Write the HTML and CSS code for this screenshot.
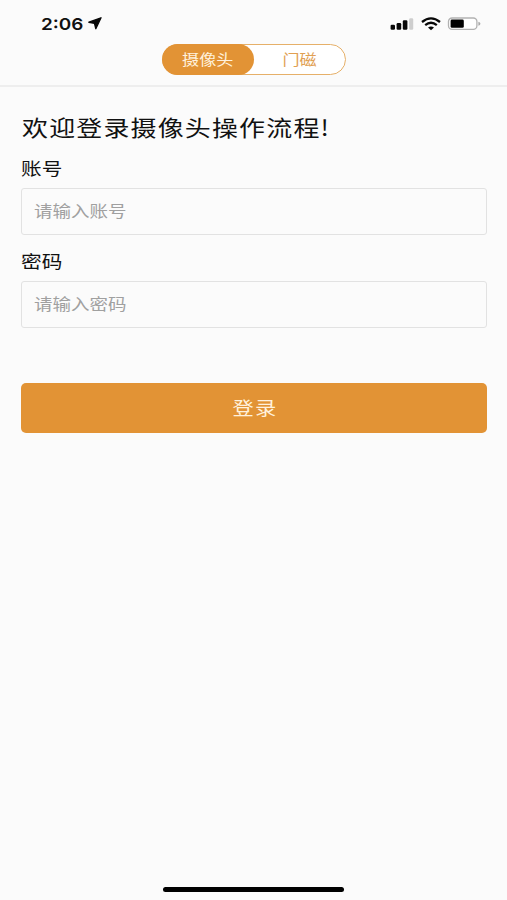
FILE: index.html
```html
<!DOCTYPE html>
<html lang="zh-CN">
<head>
<meta charset="utf-8">
<meta name="viewport" content="width=device-width, initial-scale=1">
<title>登录</title>
<link rel="stylesheet" href="styles.css">
</head>
<body>
<header class="header">
  <div class="status">
    <div class="clock">
      <span class="time">2:06</span>
      <svg class="location" width="14" height="13" viewBox="0 0 14 13"><path d="M13 .8 7.8 11.7 6.5 6.4.9 5.2z" fill="#080808" stroke="#080808" stroke-width="1.4" stroke-linejoin="round"/></svg>
    </div>
    <div class="indicators">
      <svg width="24" height="14" viewBox="0 0 24 14"><g fill="#080808"><rect x=".6" y="7.8" width="4.4" height="4.9" rx="1.2"/><rect x="6.6" y="6" width="4.6" height="6.7" rx="1.2"/><rect x="12.8" y="3.3" width="4.6" height="9.4" rx="1.2"/></g><rect x="19.2" y="1.2" width="4" height="11.5" rx="1.2" fill="#cecece"/></svg>
      <svg class="wifi" width="20" height="14" viewBox="0 0 20 14"><g fill="none" stroke="#080808" stroke-width="2.3"><path d="M1 5Q10-2.3 19 5"/><path d="M4.2 8.2Q10 3.4 15.8 8.2"/></g><path d="M7 10.6Q10 8.3 13 10.6L10 13.2z" fill="#080808"/></svg>
      <svg class="battery" width="34" height="14" viewBox="0 0 34 14"><rect x="1.5" y="1" width="28.4" height="11.4" rx="3.6" fill="#fff" stroke="#b2b2b2" stroke-width="1.3"/><rect x="3.6" y="2.6" width="13.2" height="8.2" rx="1.4" fill="#000"/><path d="M31.4 4.7v4q2-.7 2-2t-2-2z" fill="#aaa"/></svg>
    </div>
  </div>
  <nav class="tabs">
    <button class="tab tab-active"><span class="wide">摄像头</span></button>
    <button class="tab"><span class="wide">门磁</span></button>
  </nav>
</header>
<main class="content">
  <h1 class="title"><span class="wide">欢迎登录摄像头操作流程!</span></h1>
  <form class="form">
    <label class="label" for="account"><span class="wide">账号</span></label>
    <div class="field"><input class="input" id="account" type="text" placeholder="请输入账号"></div>
    <label class="label" for="password"><span class="wide">密码</span></label>
    <div class="field"><input class="input" id="password" type="password" placeholder="请输入密码"></div>
    <button class="submit" type="button"><span class="wide">登录</span></button>
  </form>
</main>
<footer class="home"><div class="home-bar"></div></footer>
</body>
</html>
```
FILE: styles.css
```css
* {
  box-sizing: border-box;
}

body {
  margin: 0;
  height: 900px;
  display: flex;
  flex-direction: column;
  background: #fbfbfb;
  color: #111;
  font-family: "Noto Sans CJK SC", sans-serif;
  overflow: hidden;
}

button {
  margin: 0;
  padding: 0;
  border: 0;
  font-family: inherit;
}

svg {
  display: block;
}

.wide {
  display: inline-block;
  transform: scaleX(1.18);
}

.header {
  height: 87px;
  border-bottom: 2px solid #eeeeee;
}

.status {
  height: 45px;
  display: flex;
  justify-content: space-between;
  padding: 0 26px 0 41px;
}

.clock {
  display: flex;
  padding-top: 13px;
}

.time {
  width: 47px;
  font: 600 16.6px/22px Inter, sans-serif;
  transform: scaleX(1.14);
  transform-origin: left;
}

.location {
  margin-top: 4px;
}

.indicators {
  display: flex;
  padding-top: 17px;
}

.wifi {
  margin-left: 7px;
}

.battery {
  margin-left: 6px;
}

.tabs {
  width: 184px;
  height: 31px;
  margin: -1px 0 0 162px;
  display: flex;
  border: 1px solid #e6b069;
  border-radius: 16px;
  background: #fff;
}

.tab {
  width: 91px;
  padding-bottom: 1px;
  background: none;
  border-radius: 16px;
  color: #e1a052;
  font-size: 14.5px;
  line-height: 28px;
}

.tab-active {
  width: 92px;
  margin: -1px 0 -1px -1px;
  padding-right: 1px;
  background: #e29335;
  color: #fff1dc;
}

.content {
  flex: 1;
  padding: 23px 20px 0 21px;
}

.title {
  margin: 0;
  font-size: 22px;
  font-weight: 400;
  line-height: 32px;
  letter-spacing: 1px;
}

.title .wide,
.label .wide {
  transform-origin: left;
}

.title .wide {
  transform: translateX(1px) scaleX(1.18);
}

.form {
  display: flex;
  flex-direction: column;
}

.label {
  height: 46px;
  padding-top: 13px;
  font-size: 17.5px;
  line-height: 26px;
}

.field {
  height: 47px;
  padding: 0 12px 2px;
  border: 1px solid #e2e2e2;
  border-radius: 3px;
  display: flex;
}

.field + .label {
  padding-top: 13px;
}

.input {
  width: 86%;
  padding: 0;
  border: 0;
  outline: 0;
  background: none;
  font-family: inherit;
  font-size: 15.8px;
  transform: scaleX(1.17);
  transform-origin: left;
}

.input::placeholder {
  color: #a0a0a0;
}

.submit {
  height: 50px;
  margin-top: 55px;
  padding: 0 0 3px 1px;
  border-radius: 5px;
  background: #e29335;
  color: #fff1dc;
  font-size: 18px;
  letter-spacing: 1px;
}

.home {
  height: 13px;
  display: flex;
  justify-content: center;
}

.home-bar {
  width: 181px;
  height: 5px;
  border-radius: 3px;
  background: #000;
}
```
